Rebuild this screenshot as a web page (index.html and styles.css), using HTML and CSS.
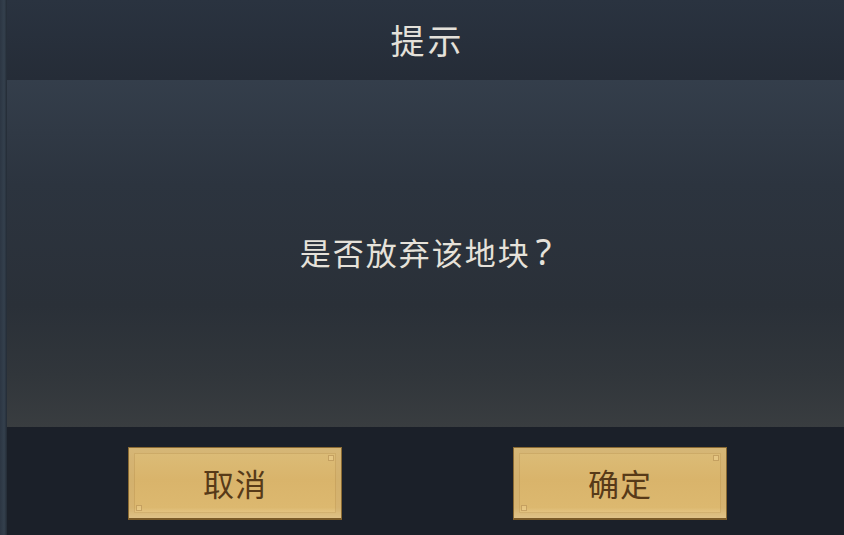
FILE: index.html
```html
<!DOCTYPE html>
<html lang="zh-CN">
<head>
    <meta charset="UTF-8">
    <meta name="viewport" content="width=device-width, initial-scale=1.0">
    <title>提示</title>
    <link rel="stylesheet" href="styles.css">
</head>
<body>
    <div class="dialog">
        <div class="edge"></div>
        <div class="main">
            <div class="dialog-title">提示</div>
            <div class="dialog-body">
                <p class="message">是否放弃该地块<span class="qmark">?</span></p>
            </div>
            <div class="dialog-footer">
                <button class="gold-btn">取消</button>
                <button class="gold-btn">确定</button>
            </div>
        </div>
    </div>
</body>
</html>
```

FILE: styles.css
```css
html, body {
    margin: 0;
    padding: 0;
}
body {
    width: 844px;
    height: 535px;
    overflow: hidden;
    background: #1b2029;
    font-family: "Noto Sans CJK SC", sans-serif;
}
.dialog {
    display: flex;
    height: 535px;
}
.edge {
    width: 7px;
    background: linear-gradient(to right, #2c3643, #34404d 60%, #232b35);
}
.main {
    flex: 1;
    display: flex;
    flex-direction: column;
}
.dialog-title {
    height: 80px;
    display: flex;
    align-items: center;
    justify-content: center;
    padding: 0 0 0 4px;
    background: linear-gradient(to bottom, #2a3340, #252c37);
    color: #e4e1da;
    font-size: 34px;
    line-height: 1;
    letter-spacing: 3px;
}
.dialog-body {
    height: 347px;
    display: flex;
    align-items: center;
    justify-content: center;
    background: linear-gradient(to bottom, #343e4b 0%, #2c343f 30%, #2a3038 65%, #31363b 85%, #393d40 100%);
}
.message {
    margin: 0 0 4px 0;
    padding-left: 2px;
    color: #e6e2da;
    font-size: 31px;
    letter-spacing: 2px;
}
.qmark {
    margin-left: 5px;
    font-family: "Noto Sans", sans-serif;
    font-size: 36px;
    line-height: 1;
}
.dialog-footer {
    flex: 1;
    display: flex;
    align-items: flex-start;
    padding: 20px 0 0 121px;
    gap: 171px;
    background: #1b2029;
}
.gold-btn {
    position: relative;
    width: 214px;
    height: 73px;
    padding: 0 0 2px 0;
    border: 1px solid #8a6a33;
    border-bottom: 2px solid #7a5a28;
    background: linear-gradient(to bottom, #dcbd79 0%, #d9b46b 45%, #dcb86f 85%, #ecd096 100%);
    box-shadow: inset 0 0 0 5px rgba(255, 235, 180, 0.18), inset 0 0 0 6px rgba(160, 120, 60, 0.25);
    color: #573a18;
    font-family: "Noto Sans CJK SC", sans-serif;
    font-size: 31px;
    letter-spacing: 1px;
    cursor: pointer;
}
.gold-btn::before,
.gold-btn::after {
    content: "";
    position: absolute;
    width: 4px;
    height: 4px;
    border: 1px solid rgba(170, 130, 70, 0.55);
    background: rgba(255, 230, 170, 0.3);
}
.gold-btn::before {
    top: 7px;
    right: 7px;
}
.gold-btn::after {
    bottom: 7px;
    left: 7px;
}
```
